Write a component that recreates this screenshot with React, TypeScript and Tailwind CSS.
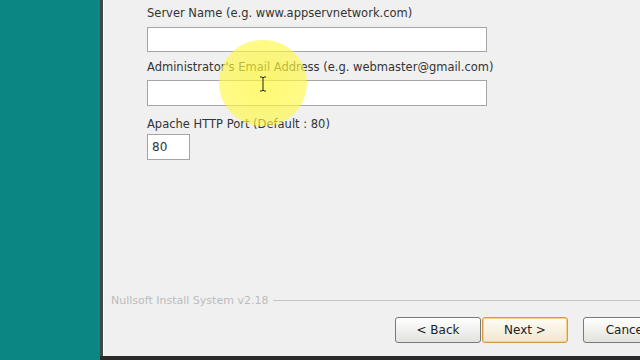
export default function App() {
  const font = { fontFamily: '"DejaVu Sans", Verdana, sans-serif' };
  return (
    <div className="w-[640px] h-[360px] overflow-hidden flex bg-[#0a8480]" style={font}>
      <div className="w-[100px] shrink-0 bg-[#0b8682]" />
      <div className="flex-1 flex flex-col">
        <div className="flex-1 flex border-l-[3px] border-[#3c4a4a]">
          <div className="flex-1 flex flex-col bg-[#f0f0f0] border-l border-white relative">
            <div className="flex flex-col pl-[43px] pt-[5px] text-[11.5px] text-[#333] leading-[16px]">
              <div>Server Name (e.g. www.appservnetwork.com)</div>
              <div className="mt-[6px] w-[340px] h-[25px] bg-white border border-[#a5a5a5]" />
              <div className="mt-[7px]">Administrator's Email Address (e.g. webmaster@gmail.com)</div>
              <div className="mt-[5px] w-[340px] h-[26px] bg-white border border-[#a5a5a5]" />
              <div className="mt-[10px]">Apache HTTP Port (Default : 80)</div>
              <div className="mt-[2px] w-[43px] h-[26px] bg-white border border-[#a5a5a5] flex items-center pl-[4px] text-[12px]">80</div>
            </div>

            <div className="mt-auto flex items-center pl-[7px] gap-[5px] h-[14px] mb-[9px]">
              <span className="text-[11px] text-[#bcbcbc] whitespace-nowrap">Nullsoft Install System v2.18</span>
              <div className="flex-1 h-[2px] border-t border-[#c4c4c4] border-b-white" />
            </div>

            <div className="flex pl-[291px] gap-[1px] mb-[13px] text-[12px] text-[#222]">
              <div className="w-[86px] h-[26px] rounded-[3px] border border-[#7a7a7a] bg-gradient-to-b from-white to-[#e2e2de] flex items-center justify-center">&lt; Back</div>
              <div className="w-[86px] h-[26px] rounded-[3px] border border-[#d49a4a] bg-gradient-to-b from-[#fffdf5] to-[#f0e6d0] shadow-[inset_0_0_0_1px_#f6cf8a] flex items-center justify-center">Next &gt;</div>
              <div className="ml-[14px] w-[86px] h-[26px] rounded-[3px] border border-[#7a7a7a] bg-gradient-to-b from-white to-[#e2e2de] flex items-center justify-center">Cancel</div>
            </div>

            <div className="absolute left-[115px] top-[40px] w-[88px] h-[86px] rounded-full bg-[radial-gradient(circle,rgba(255,248,60,0.72)_0%,rgba(255,248,70,0.64)_72%,rgba(255,250,120,0)_100%)]" />
            <svg className="absolute left-[155px] top-[76px]" width="8" height="16" viewBox="0 0 8 16">
              <path d="M1 1h2l1 1 1-1h2M4 2v12M1 15h2l1-1 1 1h2" stroke="#222" strokeWidth="1" fill="none" />
            </svg>
          </div>
        </div>
        <div className="h-[4px] bg-[#2a2a2a]" />
      </div>
    </div>
  );
}
